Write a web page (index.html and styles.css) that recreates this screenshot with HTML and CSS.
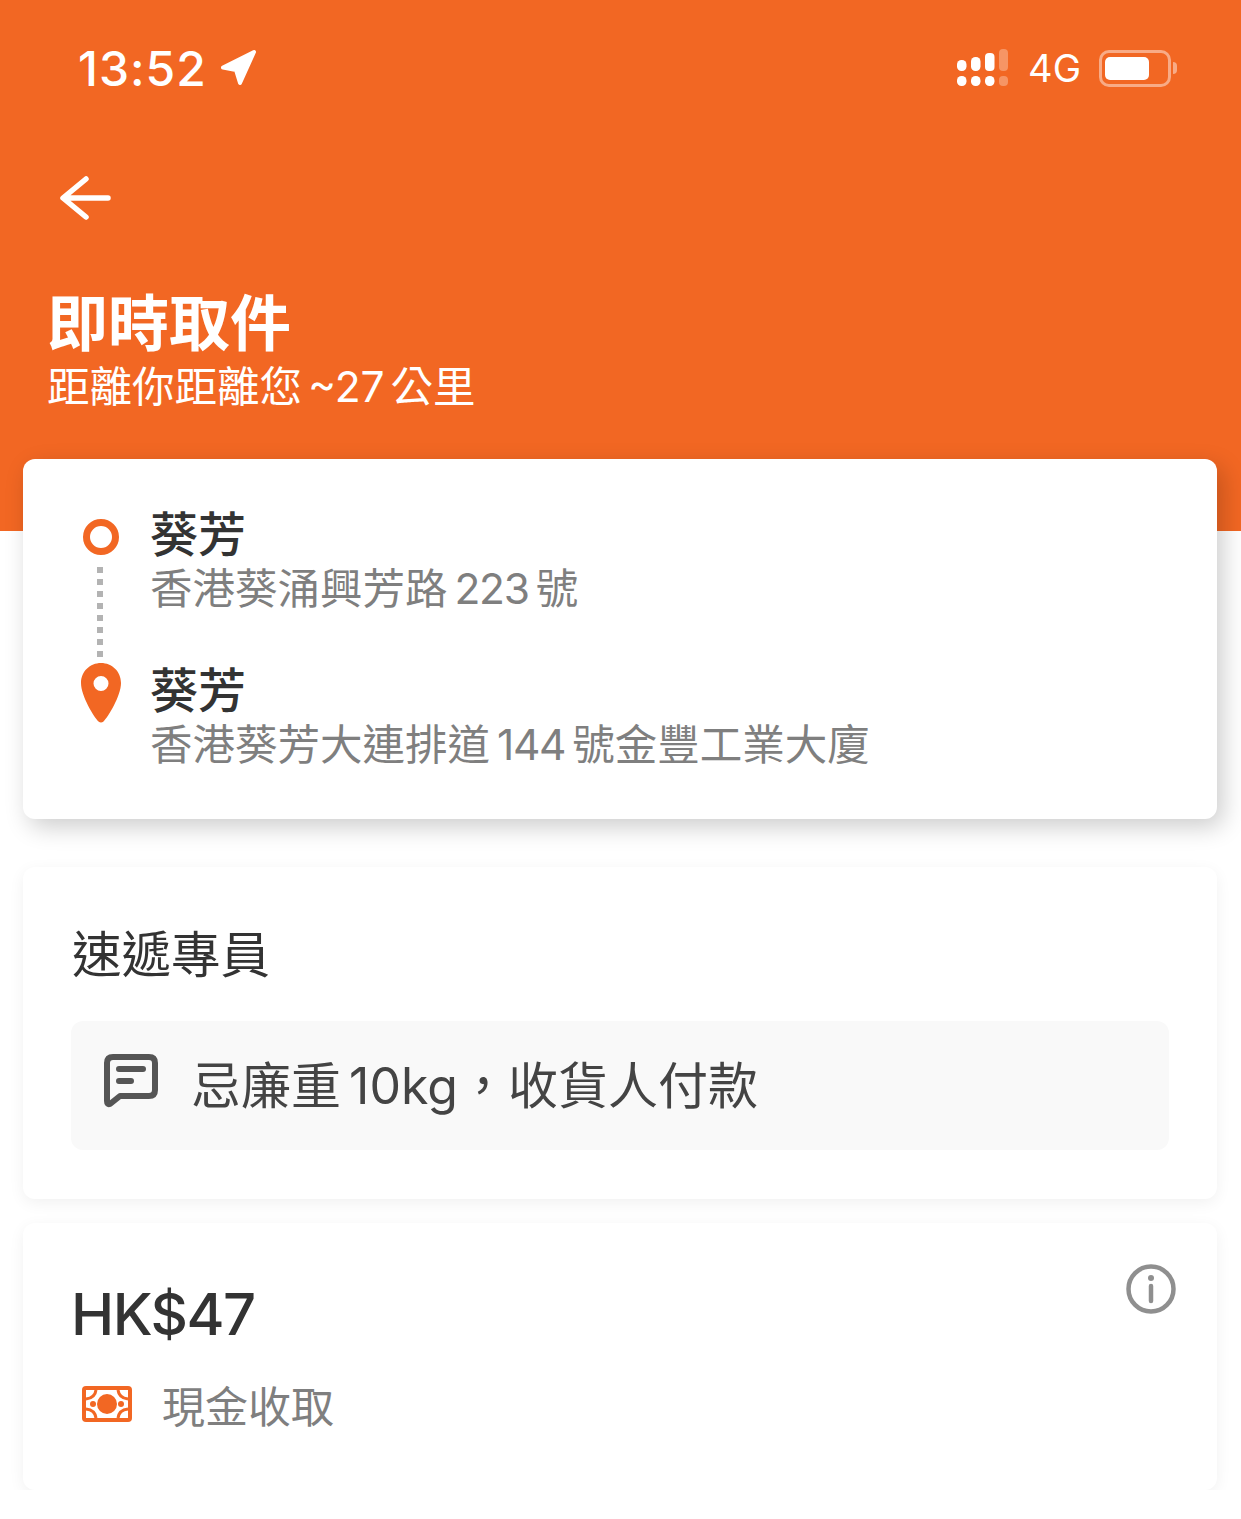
FILE: index.html
```html
<!DOCTYPE HTML>
<html>
	<head>
		<title>即時取件</title>
		<meta charset="utf-8">
		<link rel="stylesheet" href="styles.css">
	</head>
	<body>
		<div class="header">
			<div class="statusBar">
				<div class="statusLeft">
					<span class="time">13:52</span>
					<svg class="locationArrow" width="40" height="40" viewBox="0 0 40 40">
						<path d="M4 19.500 L35 4 L21 35 L17 22 Z" fill="#fff" stroke="#fff" stroke-width="4" stroke-linejoin="round"/>
					</svg>
				</div>
				<div class="statusRight">
					<svg class="signal" width="52" height="38" viewBox="0 0 52 38">
						<rect x="1" y="11" width="9.500" height="11" rx="4.500" fill="#fff"/>
						<rect x="15" y="8" width="9.500" height="14" rx="4.500" fill="#fff"/>
						<rect x="29" y="4" width="9.500" height="18" rx="4" fill="#fff"/>
						<rect x="43" y="0" width="9" height="22" rx="4" fill="#fff" opacity="0.3"/>
						<rect x="1" y="27" width="9.500" height="10" rx="4.500" fill="#fff"/>
						<rect x="15" y="27" width="9.500" height="10" rx="4.500" fill="#fff"/>
						<rect x="29" y="27" width="9.500" height="10" rx="4.500" fill="#fff"/>
						<rect x="43" y="27" width="9" height="10" rx="4" fill="#fff" opacity="0.3"/>
					</svg>
					<span class="network">4G</span>
					<div class="battery"><div class="batteryFill"></div></div>
					<div class="batteryCap"></div>
				</div>
			</div>
			<svg class="backArrow" width="52" height="46" viewBox="0 0 52 46">
				<path d="M48 23 H4 M26 4 L3 23 L26 42" fill="none" stroke="#fff" stroke-width="5.500" stroke-linecap="round" stroke-linejoin="round"/>
			</svg>
			<h1>即時取件</h1>
			<div class="subtitle">距離你距離您 ~27 公里</div>
		</div>

		<div class="card routeCard">
			<div class="stop">
				<div class="stopIcon"><div class="ring"></div></div>
				<div>
					<div class="stopName">葵芳</div>
					<div class="stopAddress">香港葵涌興芳路 <span class="num">223</span> 號</div>
				</div>
			</div>
			<div class="dots"></div>
			<div class="stop">
				<div class="stopIcon">
					<svg width="40" height="60" viewBox="0 0 40 60">
						<path fill-rule="evenodd" d="M20 0 C31 0 40 8.500 40 20 C40 33 27 54 22.500 58.500 Q20 60.500 17.500 58.500 C13 54 0 33 0 20 C0 8.500 9 0 20 0 Z M20 13 A7.500 7.500 0 1 0 20 28 A7.500 7.500 0 1 0 20 13 Z" fill="#f26723"/>
					</svg>
				</div>
				<div>
					<div class="stopName">葵芳</div>
					<div class="stopAddress">香港葵芳大連排道 <span class="num">144</span> 號金豐工業大廈</div>
				</div>
			</div>
		</div>

		<div class="card courierCard">
			<div class="cardTitle">速遞專員</div>
			<div class="noteBox">
				<svg class="noteIcon" width="56" height="56" viewBox="0 0 56 56">
					<path d="M4 48 V10 Q4 4 10 4 H46 Q52 4 52 10 V37 Q52 43 46 43 H17 L7 51 Q4 52 4 48 Z" fill="none" stroke="#555" stroke-width="6" stroke-linejoin="round"/>
					<path d="M16 16 H40 M16 28 H28" fill="none" stroke="#555" stroke-width="6" stroke-linecap="round"/>
				</svg>
				<span class="noteText">忌廉重 10kg，收貨人付款</span>
			</div>
		</div>

		<div class="card priceCard">
			<svg class="infoIcon" width="50" height="50" viewBox="0 0 50 50">
				<circle cx="25" cy="25" r="22.500" fill="none" stroke="#8f8f8f" stroke-width="4.500"/>
				<circle cx="25" cy="14" r="3" fill="#8f8f8f"/>
				<path d="M25 22 V37" stroke="#8f8f8f" stroke-width="4.500" stroke-linecap="round"/>
			</svg>
			<div class="price">HK$47</div>
			<div class="payRow">
				<svg width="50" height="36" viewBox="0 0 50 36">
					<rect width="50" height="36" rx="4" fill="#f26723"/>
					<rect x="4" y="4" width="42" height="28" fill="#fff"/>
					<path d="M14 4 Q13 12 4 13 M36 4 Q37 12 46 13 M14 32 Q13 24 4 23 M36 32 Q37 24 46 23" fill="none" stroke="#f26723" stroke-width="3"/>
					<circle cx="25" cy="18" r="10" fill="#f26723"/>
					<circle cx="11" cy="18" r="3" fill="#f26723"/>
					<circle cx="39" cy="18" r="3" fill="#f26723"/>
				</svg>
				<span class="payText">現金收取</span>
			</div>
		</div>
	</body>
</html>
```

FILE: styles.css
```css
body {
	margin: 0;
	background-color: #fff;
	font-family: "Inter", "Noto Sans CJK TC", sans-serif;
	overflow: hidden;
}
.header {
	background-color: #f26723;
	height: 531px;
	box-sizing: border-box;
	padding: 0 47px;
	color: white;
}
.statusBar {
	display: flex;
	justify-content: space-between;
	align-items: center;
	height: 136px;
	padding: 0 17px 0 31px;
}
.statusLeft, .statusRight {
	display: flex;
	align-items: center;
}
.time {
	font-size: 48px;
	font-weight: 500;
	letter-spacing: 1px;
}
.locationArrow {
	margin-left: 12px;
}
.network {
	font-size: 38px;
	margin: 0 18px 0 20px;
}
.battery {
	width: 72px;
	height: 37px;
	box-sizing: border-box;
	border: 3px solid rgba(255, 255, 255, 0.45);
	border-radius: 10px;
	padding: 4px 3px;
}
.batteryFill {
	width: 44px;
	height: 23px;
	background-color: white;
	border-radius: 5px;
}
.batteryCap {
	width: 4px;
	height: 12px;
	margin-left: 2px;
	background-color: rgba(255, 255, 255, 0.45);
	border-radius: 0 4px 4px 0;
}
.backArrow {
	display: block;
	margin: 39px 0 0 13px;
}
h1 {
	font-size: 61px;
	line-height: 76px;
	font-weight: 700;
	margin: 65px 0 0;
}
.subtitle {
	font-size: 42.500px;
	line-height: 50px;
	word-spacing: -6px;
}
.card {
	background-color: white;
	border-radius: 12px;
	margin: 0 24px 0 23px;
	box-sizing: border-box;
	box-shadow: 0 4px 16px rgba(0, 0, 0, 0.06);
}
.routeCard {
	height: 360px;
	margin-top: -72px;
	padding: 48px 58px;
	position: relative;
	box-shadow: 6px 8px 24px rgba(0, 0, 0, 0.2);
}
.stop {
	display: flex;
	align-items: flex-start;
}
.stopIcon {
	width: 40px;
	height: 60px;
	margin-right: 29px;
	display: flex;
	justify-content: center;
}
.ring {
	width: 36px;
	height: 36px;
	box-sizing: border-box;
	border: 7px solid #f26723;
	border-radius: 50%;
	margin-top: 12px;
}
.stopName {
	font-size: 48px;
	line-height: 56px;
	font-weight: 500;
	color: #333;
}
.stopAddress {
	font-size: 42.500px;
	line-height: 52px;
	color: #7f7f7f;
	word-spacing: -5px;
}
.num {
	letter-spacing: -1.300px;
}
.dots {
	width: 6px;
	height: 90px;
	margin: -48px 0 6px 16px;
	background-image: repeating-linear-gradient(#b3b3b3 0 6px, transparent 6px 12px);
}
.courierCard {
	height: 332px;
	margin-top: 48px;
	padding: 48px;
}
.cardTitle {
	font-size: 49.500px;
	line-height: 80px;
	color: #333;
	padding-left: 1px;
}
.noteBox {
	display: flex;
	align-items: center;
	height: 129px;
	margin-top: 26px;
	padding-left: 32px;
	background-color: #f9f9f9;
	border-radius: 12px;
}
.noteIcon {
	margin-bottom: 9px;
}
.noteText {
	font-size: 50px;
	color: #444;
	margin: 0 0 8px 32px;
	word-spacing: -6px;
}
.priceCard {
	height: 267px;
	margin-top: 24px;
	padding: 48px 50px;
	position: relative;
}
.infoIcon {
	position: absolute;
	top: 41px;
	right: 41px;
}
.price {
	font-size: 58px;
	line-height: 86px;
	font-weight: 500;
	letter-spacing: -1.500px;
	color: #333;
	margin-left: -2px;
}
.payRow {
	display: flex;
	align-items: center;
	margin-top: 16px;
	padding-left: 9px;
}
.payText {
	font-size: 43px;
	color: #7f7f7f;
	margin-left: 30px;
}
```
